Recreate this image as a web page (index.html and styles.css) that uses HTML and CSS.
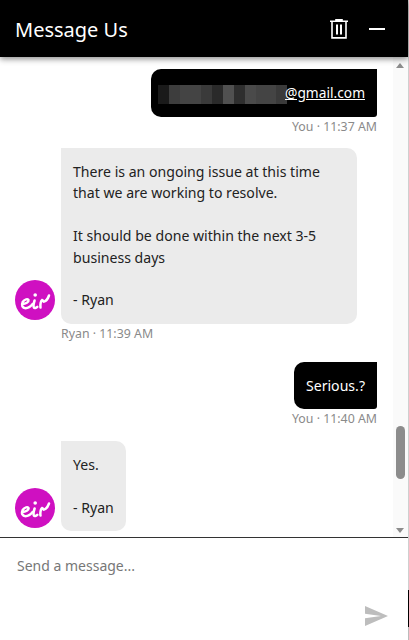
FILE: index.html
```html
<!DOCTYPE html>
<html lang="en">
<head>
<meta charset="utf-8">
<title>Message Us</title>
<link rel="stylesheet" href="styles.css">
</head>
<body>
<div class="widget">
  <div class="main">
    <header class="head">
      <h1 class="title">Message Us</h1>
      <div class="actions">
        <svg class="trash" width="18" height="20" viewBox="0 0 18 20" fill="none" stroke="#fff" stroke-width="1.6">
          <path d="M0 2.2H18M6 2.2V.8H12V2.2M2 2.2V18.9H16V2.2"/>
          <path d="M7 5.5V15.5M11 5.5V15.5" stroke-width="2"/>
        </svg>
        <span class="minus"></span>
      </div>
    </header>
    <div class="chat">
      <div class="list">
        <div class="out">
          <div class="bubble bubble-out"><a class="mail" href="#"><span class="mosaic"></span>@gmail.com</a></div>
          <div class="meta meta-a">You · 11:37 AM</div>
        </div>
        <div class="in">
          <div class="row">
            <svg class="avatar avatar-a" width="40" height="40" viewBox="0 0 40 40"><use href="#eir"/></svg>
            <div class="bubble bubble-in bubble-wide">There is an ongoing issue at this time<br>that we are working to resolve.<br><br>It should be done within the next 3-5<br>business days<br><br>- Ryan</div>
          </div>
          <div class="meta meta-b">Ryan · 11:39 AM</div>
        </div>
        <div class="out">
          <div class="bubble bubble-out">Serious.?</div>
          <div class="meta meta-c">You · 11:40 AM</div>
        </div>
        <div class="in">
          <div class="row">
            <svg class="avatar avatar-b" width="40" height="40" viewBox="0 0 40 40">
              <defs>
                <g id="eir">
                  <circle cx="20" cy="20" r="20" fill="#cf10c1"/>
                  <g fill="none" stroke="#fff" stroke-width="2.5" stroke-linecap="round" stroke-linejoin="round">
                    <path d="M7.5 24C10.5 24 14 22 13.5 20C13 18.6 9.5 19 7.7 22C6 25.5 7.6 28.2 10.5 28.2C13 28.2 15.5 26.6 17.6 24"/>
                    <path d="M19.6 20.5C18.8 23 18 25.6 18.8 27.3C19.4 28.4 21 28 22.3 26.8"/>
                    <path d="M25.5 27.6C25 24.5 26 20.5 27 20C28 19.6 27.5 22 29 21.6C31 21 33 18.5 34 15.5"/>
                  </g>
                  <circle cx="20.2" cy="15" r="1.8" fill="#fff"/>
                </g>
              </defs>
              <use href="#eir"/>
            </svg>
            <div class="bubble bubble-in bubble-last">Yes.<br><br>- Ryan</div>
          </div>
        </div>
      </div>
      <div class="scrollbar">
        <span class="arrow arrow-up"></span>
        <div class="track"><span class="thumb"></span></div>
        <span class="arrow arrow-down"></span>
      </div>
    </div>
    <footer class="composer">
      <div class="placeholder">Send a message...</div>
      <svg class="send" width="23" height="20" viewBox="0 0 23 20"><path d="M0 0L23 10L0 20V12.2L16 10L0 7.8Z" fill="#bdbdbd"/></svg>
    </footer>
  </div>
  <div class="rim"></div>
</div>
</body>
</html>
```
FILE: styles.css
```css
* { box-sizing: border-box; }
html, body { margin: 0; height: 100%; }
body { background: #fff; font-family: "Noto Sans", sans-serif; color: #222; overflow: hidden; }
.widget { display: flex; width: 409px; height: 640px; }
.main { flex: 1; min-width: 0; display: flex; flex-direction: column; }
.rim { width: 1px; background: linear-gradient(#cfcfcf 0 590px, #000 590px 627px, #bbb 627px); }
.head { height: 57px; flex: none; background: #000; color: #fff; display: flex; align-items: center; justify-content: space-between; padding: 0 23px 0 15px; position: relative; z-index: 2; box-shadow: 0 2px 6px rgba(0,0,0,.45); }
.title { margin: 0; padding-top: 1px; font-size: 20px; font-weight: 400; }
.actions { display: flex; align-items: center; gap: 21px; }
.trash { display: block; }
.minus { display: block; width: 16px; height: 2px; background: #fff; }
.chat { flex: 1; min-height: 0; display: flex; overflow: hidden; }
.list { flex: 1; min-width: 0; padding: 12px 16px 0 15px; }
.bubble { font-size: 14.1px; line-height: 21.43px; padding: 13px 12px; }
.bubble-out { background: #000; color: #fff; border-radius: 10px 0 3px 10px; width: fit-content; margin-left: auto; white-space: nowrap; }
.bubble-in { background: #ebebeb; color: #222; border-radius: 0 10px 10px 10px; width: fit-content; white-space: nowrap; }
.bubble-wide { width: 296px; }
.bubble-last { padding-bottom: 12px; }
.mail { color: #fff; font-size: 13.75px; }
.mosaic { display: inline-block; width: 129px; height: 19px; vertical-align: middle; margin: 0 -2px 0 -5px; background: linear-gradient(90deg, #1a1a1a 0 11px, #3d3d3d 11px 22px, #444 22px 43px, #3a3a3a 43px 54px, #2a2a2a 54px 65px, #505050 65px 76px, #2e2e2e 76px 87px, #4a4a4a 87px 98px, #444 98px 118px, #3a3a3a 118px 129px); }
.meta { font-size: 12.35px; line-height: 20px; color: #8a8a8a; }
.out .meta { text-align: right; }
.in .meta { margin-left: 46px; }
.meta-a { margin-bottom: 11px; }
.meta-b { margin-bottom: 18px; }
.meta-c { margin-bottom: 12px; }
.row { display: flex; align-items: flex-end; gap: 6px; }
.avatar { display: block; flex: none; }
.avatar-a { margin-bottom: 4px; }
.avatar-b { margin-bottom: 3px; }
.scrollbar { width: 15px; flex: none; background: #fafafa; display: flex; flex-direction: column; align-items: flex-start; padding: 6px 0 4px 3px; }
.arrow { display: block; width: 0; height: 0; border-left: 4.5px solid transparent; border-right: 4.5px solid transparent; flex: none; }
.arrow-up { border-bottom: 5px solid #8c8c8c; }
.arrow-down { border-top: 5px solid #8c8c8c; }
.track { flex: 1; min-height: 0; padding-top: 358px; }
.thumb { display: block; width: 9px; height: 53px; border-radius: 4.5px; background: #8c8c8c; }
.composer { height: 103px; flex: none; border-top: 1px solid #333; background: #fff; padding: 18px 20px 14px 17px; display: flex; flex-direction: column; justify-content: space-between; }
.placeholder { font-size: 14px; line-height: 20px; color: #777; }
.send { display: block; align-self: flex-end; }
```
